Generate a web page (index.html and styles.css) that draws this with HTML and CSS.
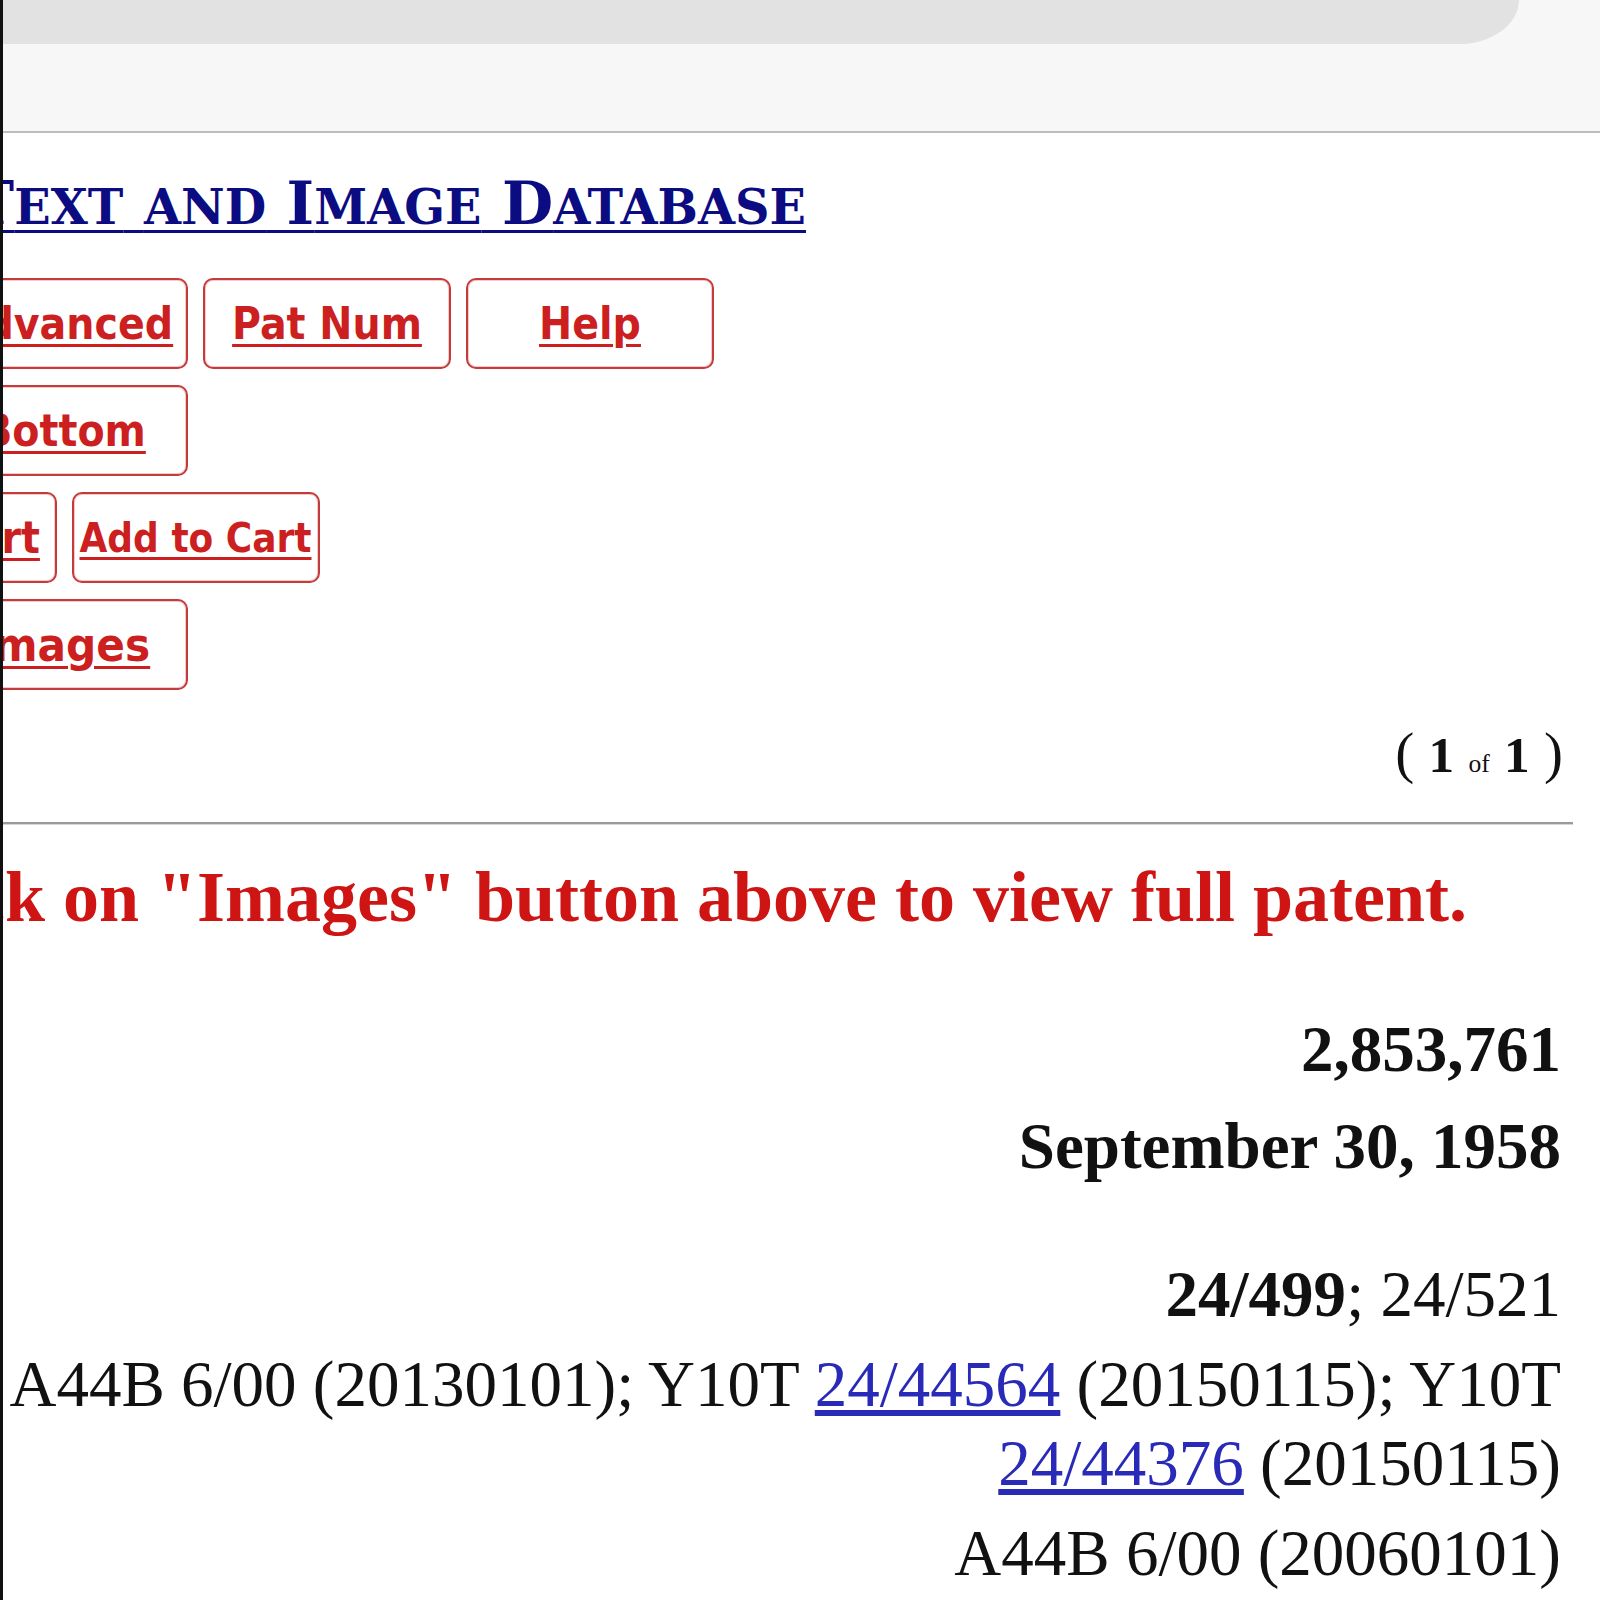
FILE: index.html
```html
<!DOCTYPE html>
<html lang="en">
  <head>
    <meta charset="UTF-8" />
    <meta name="viewport" content="width=device-width, initial-scale=1.0" />
    <title>United States Patent: 2853761</title>
    <link rel="stylesheet" href="styles.css">
  </head>
  <body>
    <div class="frame">
      <div class="toolbar">
        <div class="tab"></div>
      </div>

      <div class="title-row">
        <a class="title" href="#">USPTO P<span class="sc">atent</span> F<span class="sc">ull</span>-T<span class="sc">ext</span> <span class="sc">and</span> I<span class="sc">mage</span> D<span class="sc">atabase</span></a>
      </div>

      <nav class="nav">
        <div class="nav-row">
          <a class="btn" href="#">Home</a>
          <a class="btn" href="#">Quick</a>
          <a class="btn" href="#">Advanced</a>
          <a class="btn" href="#">Pat Num</a>
          <a class="btn" href="#">Help</a>
        </div>
        <div class="nav-row">
          <a class="btn" href="#">Bottom</a>
        </div>
        <div class="nav-row">
          <a class="btn" href="#">View Cart</a>
          <a class="btn btn-small" href="#">Add to Cart</a>
        </div>
        <div class="nav-row">
          <a class="btn btn-wide" href="#">Images</a>
        </div>
      </nav>

      <div class="count">
        ( <strong>1</strong> <span class="of">of</span> <strong>1</strong> )
      </div>

      <hr class="rule">

      <p class="notice">Click on "Images" button above to view full patent.</p>

      <div class="meta">
        <div class="field"><strong>2,853,761</strong></div>
        <div class="field"><strong>September 30, 1958</strong></div>
      </div>

      <div class="classes">
        <div class="field"><strong>24/499</strong>; 24/521</div>
        <div class="field">A44B 6/00 (20130101); Y10T <a href="#">24/44564</a> (20150115); Y10T <a href="#">24/44376</a> (20150115)</div>
        <div class="field">A44B 6/00 (20060101)</div>
      </div>
    </div>
  </body>
</html>
```

FILE: styles.css
```css
body {
  margin: 0;
  background: #fff;
  color: #111;
  font-family: "Liberation Serif", "Times New Roman", serif;
}

.frame {
  height: 1600px;
  border-left: 3px solid #111;
  overflow: hidden;
}

/* browser chrome strip */
.toolbar {
  height: 131px;
  background: #f7f7f7;
  border-bottom: 2px solid #bdbdbd;
}

.tab {
  width: 1516px;
  height: 44px;
  background: #e2e2e2;
  border-bottom-right-radius: 60px 44px;
}

.title-row {
  display: flex;
  justify-content: flex-end;
  width: 803px;
  margin-top: 41px;
  line-height: 59px;
  white-space: nowrap;
}

.title {
  font-family: "DejaVu Serif", serif;
  font-weight: bold;
  font-size: 59px;
  color: #0c0c82;
  text-decoration-thickness: 3px;
  text-underline-offset: 6px;
}

.title .sc {
  text-transform: uppercase;
  font-size: 0.81em;
}

/* button rows, centred on the page */
.nav {
  width: 1000px;
  margin: 41px 0 0 -439px;
  display: flex;
  flex-direction: column;
  gap: 16px;
}

.nav-row {
  display: flex;
  justify-content: center;
  gap: 15px;
}

.btn {
  flex: none;
  width: 244px;
  height: 87px;
  display: flex;
  align-items: center;
  justify-content: center;
  border: 2px solid #c53a3a;
  border-radius: 10px;
  box-shadow: inset 0 0 0 1px #f3c9c9;
  color: #cc1f1f;
  font-family: "DejaVu Sans", "Liberation Sans", sans-serif;
  font-stretch: condensed;
  font-weight: bold;
  font-size: 44px;
  text-decoration-thickness: 3px;
  text-underline-offset: 5px;
  white-space: nowrap;
}

.btn-small {
  font-size: 40px;
}

.btn-wide {
  font-size: 47px;
}

.count {
  margin: 30px 37px 0 0;
  text-align: right;
  font-size: 57px;
  line-height: 66px;
}

.count strong {
  font-size: 0.9em;
  line-height: 0;
}

.count .of {
  font-size: 0.45em;
  line-height: 0;
}

.rule {
  margin: 36px 27px 0 0;
  border: none;
  border-top: 2px solid #9a9a9a;
  border-bottom: 1px solid #d6d6d6;
}

.notice {
  margin: 32px 0 0 -122px;
  white-space: nowrap;
  color: #cf1414;
  font-weight: bold;
  font-size: 72px;
  line-height: 80px;
}

.field {
  text-align: right;
  font-size: 65px;
  line-height: 79px;
}

.meta {
  margin: 73px 39px 0 0;
  display: flex;
  flex-direction: column;
  gap: 18px;
}

.classes {
  margin: 69px 39px 0 -117px;
  display: flex;
  flex-direction: column;
  gap: 11px;
}

.field a {
  color: #2a2ab8;
}
```
